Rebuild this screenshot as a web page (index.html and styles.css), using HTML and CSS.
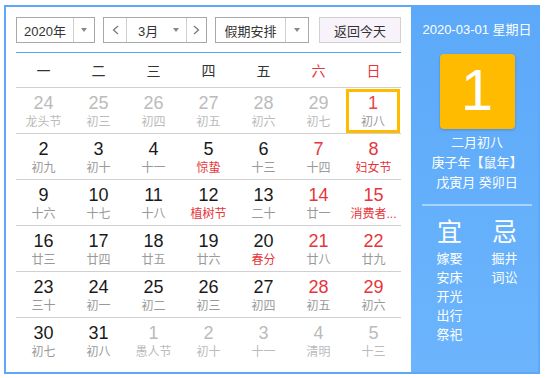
FILE: index.html
```html
<!DOCTYPE html>
<html lang="zh">
<head>
<meta charset="utf-8">
<title>万年历</title>
<link rel="stylesheet" href="styles.css">
</head>
<body>
<div class="cal">
  <div class="main">
    <div class="toolbar">
      <div class="sel year"><span class="val">2020年</span><span class="arr"></span></div>
      <div class="sel month">
        <span class="nav"><svg width="7" height="10" viewBox="0 0 7 10"><polyline points="6,1 1.5,5 6,9" fill="none" stroke="#777" stroke-width="1.2"/></svg></span>
        <span class="mid"><span class="mtext">3月</span><span class="tri"></span></span>
        <span class="nav last"><svg width="7" height="10" viewBox="0 0 7 10"><polyline points="1,1 5.5,5 1,9" fill="none" stroke="#777" stroke-width="1.2"/></svg></span>
      </div>
      <div class="sel holiday"><span class="val">假期安排</span><span class="arr"></span></div>
      <div class="today-btn">返回今天</div>
    </div>
    <div class="line"></div>
    <div class="head">
      <span>一</span><span>二</span><span>三</span><span>四</span><span>五</span><span class="red">六</span><span class="red">日</span>
    </div>
    <div class="row">
      <div class="cell other"><span class="n">24</span><span class="l">龙头节</span></div>
      <div class="cell other"><span class="n">25</span><span class="l">初三</span></div>
      <div class="cell other"><span class="n">26</span><span class="l">初四</span></div>
      <div class="cell other"><span class="n">27</span><span class="l">初五</span></div>
      <div class="cell other"><span class="n">28</span><span class="l">初六</span></div>
      <div class="cell other"><span class="n">29</span><span class="l">初七</span></div>
      <div class="cell today wk"><span class="n">1</span><span class="l">初八</span></div>
    </div>
    <div class="row">
      <div class="cell"><span class="n">2</span><span class="l">初九</span></div>
      <div class="cell"><span class="n">3</span><span class="l">初十</span></div>
      <div class="cell"><span class="n">4</span><span class="l">十一</span></div>
      <div class="cell"><span class="n">5</span><span class="l fest">惊蛰</span></div>
      <div class="cell"><span class="n">6</span><span class="l">十三</span></div>
      <div class="cell wk"><span class="n">7</span><span class="l">十四</span></div>
      <div class="cell wk"><span class="n">8</span><span class="l fest">妇女节</span></div>
    </div>
    <div class="row">
      <div class="cell"><span class="n">9</span><span class="l">十六</span></div>
      <div class="cell"><span class="n">10</span><span class="l">十七</span></div>
      <div class="cell"><span class="n">11</span><span class="l">十八</span></div>
      <div class="cell"><span class="n">12</span><span class="l fest">植树节</span></div>
      <div class="cell"><span class="n">13</span><span class="l">二十</span></div>
      <div class="cell wk"><span class="n">14</span><span class="l">廿一</span></div>
      <div class="cell wk"><span class="n">15</span><span class="l fest">消费者...</span></div>
    </div>
    <div class="row">
      <div class="cell"><span class="n">16</span><span class="l">廿三</span></div>
      <div class="cell"><span class="n">17</span><span class="l">廿四</span></div>
      <div class="cell"><span class="n">18</span><span class="l">廿五</span></div>
      <div class="cell"><span class="n">19</span><span class="l">廿六</span></div>
      <div class="cell"><span class="n">20</span><span class="l fest">春分</span></div>
      <div class="cell wk"><span class="n">21</span><span class="l">廿八</span></div>
      <div class="cell wk"><span class="n">22</span><span class="l">廿九</span></div>
    </div>
    <div class="row">
      <div class="cell"><span class="n">23</span><span class="l">三十</span></div>
      <div class="cell"><span class="n">24</span><span class="l">初一</span></div>
      <div class="cell"><span class="n">25</span><span class="l">初二</span></div>
      <div class="cell"><span class="n">26</span><span class="l">初三</span></div>
      <div class="cell"><span class="n">27</span><span class="l">初四</span></div>
      <div class="cell wk"><span class="n">28</span><span class="l">初五</span></div>
      <div class="cell wk"><span class="n">29</span><span class="l">初六</span></div>
    </div>
    <div class="row">
      <div class="cell"><span class="n">30</span><span class="l">初七</span></div>
      <div class="cell"><span class="n">31</span><span class="l">初八</span></div>
      <div class="cell other"><span class="n">1</span><span class="l">愚人节</span></div>
      <div class="cell other"><span class="n">2</span><span class="l">初十</span></div>
      <div class="cell other"><span class="n">3</span><span class="l">十一</span></div>
      <div class="cell other"><span class="n">4</span><span class="l">清明</span></div>
      <div class="cell other"><span class="n">5</span><span class="l">十三</span></div>
    </div>
  </div>
  <div class="side">
    <div class="date">2020-03-01 星期日</div>
    <div class="big">1</div>
    <div class="lunar">二月初八<br>庚子年【鼠年】<br>戊寅月 癸卯日</div>
    <div class="sep"></div>
    <div class="yj">
      <div class="col"><span class="yh">宜</span><span>嫁娶</span><span>安床</span><span>开光</span><span>出行</span><span>祭祀</span></div>
      <div class="col"><span class="yh">忌</span><span>掘井</span><span>词讼</span></div>
    </div>
  </div>
</div>
</body>
</html>
```
FILE: styles.css
```css
body {
  margin: 0;
  background: #fff;
  font-family: "Liberation Sans", "Noto Sans CJK SC", sans-serif;
}
.cal {
  margin: 5px 0 0 4px;
  width: 536px;
  height: 369px;
  box-sizing: border-box;
  border: 2px solid #5ca9f9;
  display: flex;
}
.main {
  width: 405px;
  padding: 10px 10px 0;
  box-sizing: border-box;
  background: #fff;
}
.toolbar {
  display: flex;
  height: 26px;
}
.sel {
  display: flex;
  height: 26px;
  box-sizing: border-box;
  border: 1px solid #a8a8a8;
  font-size: 13px;
  color: #333;
}
.val {
  display: flex;
  align-items: center;
  justify-content: center;
  border-right: 1px solid #d0d0d0;
}
.arr {
  flex: 1;
  display: flex;
  align-items: center;
  justify-content: center;
}
.arr::after, .tri::after {
  content: "";
  display: block;
  border-left: 3.5px solid transparent;
  border-right: 3.5px solid transparent;
  border-top: 4px solid #888;
}
.year { width: 79px; }
.year .val { width: 56px; }
.month { width: 104px; margin-left: 8px; }
.nav {
  width: 22px;
  display: flex;
  align-items: center;
  justify-content: center;
  border-right: 1px solid #d0d0d0;
}
.nav.last { border-right: none; flex: 1; }
.mid {
  width: 60px;
  display: flex;
  align-items: center;
  padding-left: 11px;
  box-sizing: border-box;
  border-right: 1px solid #d0d0d0;
}
.tri { margin-left: 15px; }
.holiday { width: 94px; margin-left: 8px; }
.holiday .val { width: 69px; }
.today-btn {
  width: 82px;
  margin-left: 10px;
  height: 26px;
  box-sizing: border-box;
  border: 1px solid #d0d0d0;
  background: #f8f2fb;
  font-size: 13px;
  color: #333;
  display: flex;
  align-items: center;
  justify-content: center;
}
.line {
  height: 1px;
  background: #5ba7f7;
  margin-top: 9px;
}
.head {
  display: grid;
  grid-template-columns: repeat(7, 55px);
  height: 35px;
  box-sizing: border-box;
  align-items: center;
  text-align: center;
  font-size: 14px;
  color: #333;
  border-bottom: 1px solid #d0d0d0;
}
.red { color: #e8353b; }
.row {
  display: grid;
  grid-template-columns: repeat(7, 55px);
  height: 46px;
  box-sizing: border-box;
  border-bottom: 1px solid #d0d0d0;
}
.row:last-child { border-bottom: none; }
.cell {
  text-align: center;
  padding-top: 5px;
  box-sizing: border-box;
}
.n {
  display: block;
  font-size: 18px;
  line-height: 20px;
  color: #1a1a1a;
}
.l {
  display: block;
  margin-top: 1px;
  font-size: 12px;
  line-height: 16px;
  color: #999;
  white-space: nowrap;
}
.wk .n { color: #e8353b; }
.l.fest { color: #e8353b; }
.other .n, .other .l { color: #bbb; }
.today {
  margin: 1px 1px 0 0;
  height: 44px;
  border: 3px solid #ffbb00;
  padding-top: 1px;
}
.today .n { color: #e8454a; }
.side {
  flex: 1;
  background: linear-gradient(#5ca9f9, #6cb5fd);
  color: #fff;
  padding: 13px 0 0 5px;
  display: flex;
  flex-direction: column;
  align-items: center;
}
.date {
  font-size: 13px;
  line-height: 20px;
}
.big {
  width: 75px;
  height: 75px;
  margin-top: 14px;
  background: #ffbb00;
  border-radius: 4px;
  font-size: 58px;
  line-height: 72px;
  text-align: center;
  box-shadow: 0 1px 3px rgba(0, 0, 60, 0.2);
}
.lunar {
  margin-top: 4px;
  font-size: 13px;
  line-height: 20px;
  text-align: center;
}
.sep {
  width: 110px;
  height: 2px;
  background: rgba(255, 255, 255, 0.45);
  margin-top: 11px;
}
.yj {
  display: flex;
  margin-top: 11px;
}
.col {
  width: 55px;
  display: flex;
  flex-direction: column;
  align-items: center;
  font-size: 13px;
  line-height: 19px;
}
.yh {
  font-size: 25px;
  line-height: 30px;
  margin-bottom: 2px;
}
```
